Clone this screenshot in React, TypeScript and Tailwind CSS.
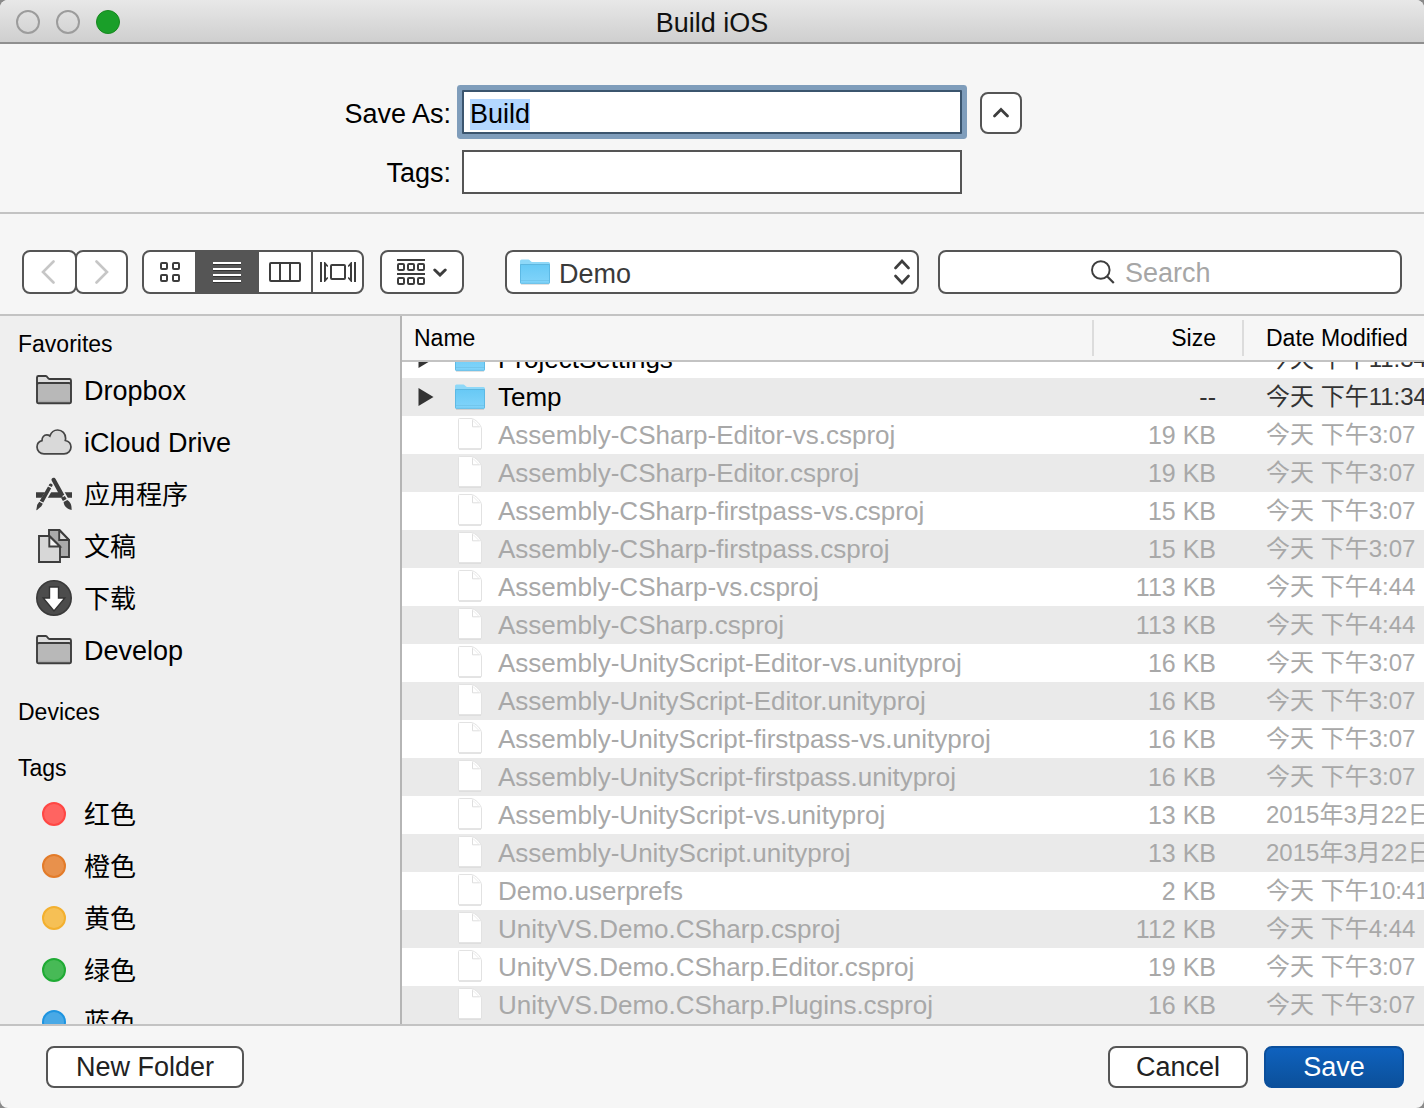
import { useLayoutEffect, useRef } from "react";
import type { ReactNode } from "react";

const files: { name: string; size: string; date: string; folder?: boolean }[] = [
  { name: "ProjectSettings", size: "--", date: "今天 下午11:34", folder: true },
  { name: "Temp", size: "--", date: "今天 下午11:34", folder: true },
  { name: "Assembly-CSharp-Editor-vs.csproj", size: "19 KB", date: "今天 下午3:07" },
  { name: "Assembly-CSharp-Editor.csproj", size: "19 KB", date: "今天 下午3:07" },
  { name: "Assembly-CSharp-firstpass-vs.csproj", size: "15 KB", date: "今天 下午3:07" },
  { name: "Assembly-CSharp-firstpass.csproj", size: "15 KB", date: "今天 下午3:07" },
  { name: "Assembly-CSharp-vs.csproj", size: "113 KB", date: "今天 下午4:44" },
  { name: "Assembly-CSharp.csproj", size: "113 KB", date: "今天 下午4:44" },
  { name: "Assembly-UnityScript-Editor-vs.unityproj", size: "16 KB", date: "今天 下午3:07" },
  { name: "Assembly-UnityScript-Editor.unityproj", size: "16 KB", date: "今天 下午3:07" },
  { name: "Assembly-UnityScript-firstpass-vs.unityproj", size: "16 KB", date: "今天 下午3:07" },
  { name: "Assembly-UnityScript-firstpass.unityproj", size: "16 KB", date: "今天 下午3:07" },
  { name: "Assembly-UnityScript-vs.unityproj", size: "13 KB", date: "2015年3月22日" },
  { name: "Assembly-UnityScript.unityproj", size: "13 KB", date: "2015年3月22日" },
  { name: "Demo.userprefs", size: "2 KB", date: "今天 下午10:41" },
  { name: "UnityVS.Demo.CSharp.csproj", size: "112 KB", date: "今天 下午4:44" },
  { name: "UnityVS.Demo.CSharp.Editor.csproj", size: "19 KB", date: "今天 下午3:07" },
  { name: "UnityVS.Demo.CSharp.Plugins.csproj", size: "16 KB", date: "今天 下午3:07" },
];

const tags = [
  { label: "红色", dot: "border-[#ff4744] bg-[#ff6461]" },
  { label: "橙色", dot: "border-[#e37b29] bg-[#e8914c]" },
  { label: "黄色", dot: "border-[#f3b02f] bg-[#f6c055]" },
  { label: "绿色", dot: "border-[#1fab34] bg-[#47ba56]" },
  { label: "蓝色", dot: "border-[#1e94e0] bg-[#49a9e6]" },
];

function BlueFolder() {
  return (
    <svg width="30" height="26" viewBox="0 0 30 26" aria-hidden="true" className="shrink-0">
      <defs>
        <linearGradient id="folder-front" x1="0" y1="0" x2="0" y2="1">
          <stop offset="0" stopColor="#67c9f5" />
          <stop offset="1" stopColor="#82d4fa" />
        </linearGradient>
      </defs>
      <path d="M1 25.3h28" stroke="#000" strokeOpacity=".15" />
      <path d="M0 2a1.500 1.500 0 0 1 1.500-1.500h7c1.500 0 2 2.500 3.500 2.500h16.500A1.500 1.500 0 0 1 30 4.500V8H0z" fill="#8ed8f8" />
      <path d="M0 5.500h30v18a1.200 1.200 0 0 1-1.200 1.200H1.200A1.200 1.200 0 0 1 0 23.500z" fill="url(#folder-front)" />
      <path d="M.5 5.500h29" stroke="#5fb7df" />
      <path d="M.5 21.500h29" stroke="#72c6ec" />
      <path d="M.5 5.500v18c0 .5.3.800.8.800h27.400c.5 0 .8-.3.800-.8v-18" fill="none" stroke="#57b4e0" strokeOpacity=".8" />
    </svg>
  );
}

function PageIcon() {
  return (
    <svg width="24" height="34" viewBox="0 0 24 34" aria-hidden="true" className="shrink-0">
      <path d="M.5 1.500a1 1 0 0 1 1-1H13c4 0 10.500 6.500 10.500 10.500v19a1 1 0 0 1-1 1h-21a1 1 0 0 1-1-1z" fill="#fff" stroke="#e2e2e2" />
      <path d="M1 31h22" stroke="#d6d6d6" />
      <path d="M14.500 1.500v7.300h7.300" fill="none" stroke="#dedede" />
      <path d="M15 2.500l6 6" stroke="#ececec" />
    </svg>
  );
}

function GrayFolder() {
  return (
    <svg width="36" height="30" viewBox="0 0 36 30" aria-hidden="true">
      <path d="M1 28V2.500A1.500 1.500 0 0 1 2.500 1h7.300c1.700 0 1.900 3 3.700 3h20A1.500 1.500 0 0 1 35 5.500V28z" fill="#dcdcdc" />
      <path d="M1 8.500h34V28H1z" fill="#b8b8b8" />
      <path d="M2 26.500h32" stroke="#a9a9a9" strokeWidth="1.500" />
      <path d="M1 27V2.500A1.500 1.500 0 0 1 2.500 1h7.300c1.700 0 1.900 3 3.700 3h20A1.500 1.500 0 0 1 35 5.500V27a1.200 1.200 0 0 1-1.200 1.200H2.200A1.200 1.200 0 0 1 1 27zM1 10c0-1.300.7-2 2-2h30c1.300 0 2 .7 2 2" fill="none" stroke="#3d3d3d" strokeWidth="1.900" />
    </svg>
  );
}

function CloudIcon() {
  return (
    <svg width="36" height="26" viewBox="0 0 36 26" aria-hidden="true">
      <path d="M8 24.800C4 24.800 1 21.800 1 18c0-3.200 2-5.600 5-6.400C5.900 8.200 8 5.900 10.700 5.900c1.400 0 2.400.4 3.200 1.100C15.200 3.300 18.200 1 21.600 1c4.700 0 8 3.700 8 8.300 0 .8-.1 1.500-.3 2.200C32.700 12.300 35 14.800 35 18c0 3.800-3 6.800-7 6.800z" fill="#d9d9d9" stroke="#454545" strokeWidth="1.700" />
    </svg>
  );
}

function ApplicationsIcon() {
  return (
    <svg width="36" height="34" viewBox="0 0 36 34" aria-hidden="true" fill="#3d3d3d">
      <path d="M0 15.300h36v5.500H0z" />
      <path d="M10.800 12 3.800 24h6.200l7-12zM22.500 12l6.500 12h4.500L27 12z" fill="#efefef" />
      <path d="M13.400 7.100c1-1.500 3.800-.2 3.100 1.700l-.7 1.300-3.200-1.700zM12 9.500l3.200 1.700-7.900 14.300-3.500-1.800zM3.300 24.800l3.500 1.900-1.400 2.500-4.600 4-.5-.3.900-5.100z" />
      <path d="M15.600 1.900c1-1.700 3.200-1.600 4 0l8.700 15.900-3.700 2.100L15.900 4.100c-.4-.8-.6-1.600-.3-2.200zM25.200 20.900l3.700-2 1.700 3.100-3.700 2zM27.600 25.100l3.700-2c2.700 1.600 4.600 4.400 4.300 9.900-4.200-.9-7.700-3.300-8-7.900z" />
    </svg>
  );
}

function DocumentsIcon() {
  return (
    <svg width="32" height="34" viewBox="0 0 32 34" aria-hidden="true" stroke="#3d3d3d" strokeWidth="1.900">
      <path d="M11 1h10.500L31 11v17H11z" fill="#a9a9a9" />
      <path d="M21.200 1v10H31z" fill="#dedede" />
      <path d="M1 7h10.500L22 17.500V33H1z" fill="#d7d7d7" />
      <path d="M11.300 7v10.500H22z" fill="#f2f2f2" />
    </svg>
  );
}

function DownloadsIcon() {
  return (
    <svg width="36" height="36" viewBox="0 0 36 36" aria-hidden="true">
      <circle cx="18" cy="18" r="17.200" fill="#4c4c4c" stroke="#3a3a3a" strokeWidth="1.600" />
      <path d="M13.500 7h9v11h6.300L18 31 7.200 18h6.300z" fill="#fff" stroke="#333" strokeWidth="1.400" />
    </svg>
  );
}

function SidebarHeading({ children }: { children: ReactNode }) {
  return <h2 className="h-10 pl-[18px] text-[23px] leading-10 font-normal">{children}</h2>;
}

function SidebarItem({ icon, label, cjk }: { icon: ReactNode; label: string; cjk?: boolean }) {
  return (
    <li>
      <button type="button" className="flex h-[52px] w-full items-center gap-3 pl-9 text-left">
        <span className="flex w-9 justify-center">{icon}</span>
        <span className={cjk ? "pt-0.5 text-[26px] leading-10" : "pt-0.5 text-[27px] leading-10"}>{label}</span>
      </button>
    </li>
  );
}

const box = "border-2 border-[#555] bg-white";

export default function App() {
  const nameRef = useRef<HTMLInputElement>(null);
  const listRef = useRef<HTMLDivElement>(null);

  useLayoutEffect(() => {
    nameRef.current?.focus();
    nameRef.current?.select();
    if (listRef.current) listRef.current.scrollTop = 22;
  }, []);

  return (
    <div className="h-screen bg-[#8a8a8a] font-['Liberation_Sans','Noto_Sans_CJK_SC',sans-serif] text-black">
      <div className="flex h-full flex-col overflow-hidden rounded-lg bg-[#f6f6f6]">
        <header className="grid h-11 shrink-0 grid-cols-[1fr_auto_1fr] items-center border-b-2 border-[#8f8f8f] bg-linear-to-b from-[#e8e8e8] to-[#cfcfcf] px-4 pt-0.5">
          <div className="flex gap-4">
            <button type="button" aria-label="Close" className="size-6 rounded-full border-2 border-[#9c9c9c]" />
            <button type="button" aria-label="Minimize" className="size-6 rounded-full border-2 border-[#9c9c9c]" />
            <button type="button" aria-label="Zoom" className="size-6 rounded-full border border-[#17881f] bg-[#1a9f29]" />
          </div>
          <h1 className="pt-0.5 text-[27px] leading-8 font-normal text-[#111]">Build iOS</h1>
        </header>

        <section className="grid shrink-0 grid-cols-[1fr_500px_1fr] items-center gap-y-4 border-b-2 border-[#c3c3c3] pt-[46px] pb-[18px]">
          <label htmlFor="save-as" className="pt-1 pr-[11px] text-right text-[27px] leading-10">
            Save As:
          </label>
          <input
            id="save-as"
            ref={nameRef}
            defaultValue="Build"
            className="h-11 w-full border-2 border-[#3b556e] bg-white px-[6px] pt-1 text-[27px] text-black outline-none selection:bg-[#b3d7ff] selection:text-black focus:rounded-[1px] focus:ring-[5px] focus:ring-[#7f9dbb]"
          />
          <button type="button" aria-label="Collapse" className={`ml-[18px] flex h-[42px] w-[42px] items-center justify-center self-end rounded-lg ${box}`}>
            <svg width="18" height="12" viewBox="0 0 18 12" aria-hidden="true">
              <path d="M2.500 9 9 2.500 15.500 9" fill="none" stroke="#3d3d3d" strokeWidth="2.800" strokeLinecap="round" />
            </svg>
          </button>
          <label htmlFor="tags" className="pt-0.5 pr-[11px] text-right text-[27px] leading-10">
            Tags:
          </label>
          <input id="tags" className={`h-11 w-full px-[6px] text-[27px] outline-none ${box}`} />
        </section>

        <section className="flex shrink-0 items-center border-b-2 border-[#c3c3c3] px-[22px] pt-9 pb-5">
          <div className="flex shrink-0">
            <button type="button" aria-label="Back" className={`flex h-11 w-[55px] items-center justify-center rounded-lg pr-1 ${box}`}>
              <svg width="14" height="24" viewBox="0 0 14 24" aria-hidden="true">
                <path d="M12.500 1.500 2 12l10.500 10.500" fill="none" stroke="#c6c6c6" strokeWidth="2.600" strokeLinecap="round" />
              </svg>
            </button>
            <button type="button" aria-label="Forward" className={`-ml-0.5 flex h-11 w-[53px] items-center justify-center rounded-lg ${box}`}>
              <svg width="14" height="24" viewBox="0 0 14 24" aria-hidden="true">
                <path d="M1.500 1.500 12 12 1.500 22.500" fill="none" stroke="#c6c6c6" strokeWidth="2.600" strokeLinecap="round" />
              </svg>
            </button>
          </div>

          <div role="group" aria-label="View" className={`ml-[14px] flex h-11 w-[222px] shrink-0 overflow-hidden rounded-lg ${box}`}>
            <button type="button" aria-label="Icons" className="flex w-[51px] items-center justify-center">
              <svg width="20" height="20" viewBox="0 0 20 20" aria-hidden="true" fill="none" stroke="#3d3d3d" strokeWidth="2">
                <rect x="1" y="1" width="6" height="6" rx="1" />
                <rect x="13" y="1" width="6" height="6" rx="1" />
                <rect x="1" y="13" width="6" height="6" rx="1" />
                <rect x="13" y="13" width="6" height="6" rx="1" />
              </svg>
            </button>
            <button type="button" aria-label="List" aria-pressed="true" className="flex w-16 items-center justify-center bg-[#555]">
              <svg width="28" height="22" viewBox="0 0 28 22" aria-hidden="true">
                <path d="M0 3.500h28M0 9.500h28M0 15.500h28M0 21.500h28" stroke="#333" />
                <path d="M0 2h28M0 8h28M0 14h28M0 20h28" stroke="#fff" strokeWidth="2" />
              </svg>
            </button>
            <button type="button" aria-label="Columns" className="flex w-[52px] items-center justify-center">
              <svg width="32" height="20" viewBox="0 0 32 20" aria-hidden="true" fill="none" stroke="#3d3d3d" strokeWidth="2">
                <rect x="1" y="1" width="30" height="18" rx="1" />
                <path d="M11 1v18M21 1v18" />
              </svg>
            </button>
            <button type="button" aria-label="Cover Flow" className="flex flex-1 items-center justify-center border-l-2 border-[#555]">
              <svg width="36" height="20" viewBox="0 0 36 20" aria-hidden="true" fill="#3d3d3d">
                <path d="M0 0h2v20H0zM34 0h2v20h-2z" />
                <path d="M4 0h1l3 3.500v1.500L6 4v12l2-1v1.500L5 20H4zM32 0h-1l-3 3.500v1.500l2-1v12l-2-1v1.500l3 3.500h1z" />
                <rect x="11" y="3" width="14" height="14" rx="1" fill="none" stroke="#3d3d3d" strokeWidth="2" />
              </svg>
            </button>
          </div>

          <button type="button" aria-label="Arrange by" className={`ml-4 flex h-11 w-[84px] shrink-0 items-center justify-center gap-2 rounded-lg ${box}`}>
            <svg width="28" height="26" viewBox="0 0 28 26" aria-hidden="true" fill="none" stroke="#3d3d3d" strokeWidth="2">
              <path d="M0 1h28M0 15h28" />
              <rect x="1" y="5" width="6" height="6" rx="1" />
              <rect x="11" y="5" width="6" height="6" rx="1" />
              <rect x="21" y="5" width="6" height="6" rx="1" />
              <rect x="1" y="19" width="6" height="6" rx="1" />
              <rect x="11" y="19" width="6" height="6" rx="1" />
              <rect x="21" y="19" width="6" height="6" rx="1" />
            </svg>
            <svg width="14" height="10" viewBox="0 0 14 10" aria-hidden="true">
              <path d="m1.800 3 5.200 5 5.200-5" fill="none" stroke="#3d3d3d" strokeWidth="3" strokeLinecap="round" />
            </svg>
          </button>

          <div className="relative ml-[41px] min-w-0 flex-1">
            <select aria-label="Location" className={`h-11 w-full appearance-none rounded-lg pt-0.5 pl-[52px] text-[27px] text-[#3a3a3a] outline-none ${box}`}>
              <option>Demo</option>
            </select>
            <span className="pointer-events-none absolute inset-y-0 left-[15px] flex items-center">
              <BlueFolder />
            </span>
            <svg width="16" height="26" viewBox="0 0 16 26" aria-hidden="true" className="pointer-events-none absolute inset-y-0 right-[9px] my-auto">
              <path d="M1.500 9 8 2l6.500 7M1.500 17 8 24l6.500-7" fill="none" stroke="#3d3d3d" strokeWidth="2.600" strokeLinecap="round" />
            </svg>
          </div>

          <label className={`ml-[19px] flex h-11 w-[464px] shrink-0 items-center justify-center gap-[10px] rounded-lg ${box}`}>
            <svg width="24" height="24" viewBox="0 0 24 24" aria-hidden="true" className="shrink-0">
              <circle cx="9.800" cy="10" r="8.800" fill="none" stroke="#3d3d3d" strokeWidth="1.900" />
              <path d="m16 16.200 6.800 6.800" stroke="#3d3d3d" strokeWidth="2.200" />
            </svg>
            <input type="search" aria-label="Search" placeholder="Search" className="w-[124px] bg-transparent pt-0.5 text-[27px] outline-none placeholder:text-[#a6a6a6]" />
          </label>
        </section>

        <main className="flex min-h-0 flex-1">
          <nav className="w-[402px] shrink-0 overflow-hidden border-r-2 border-[#b5b5b5] bg-[#efefef] pt-2">
            <SidebarHeading>Favorites</SidebarHeading>
            <ul>
              <SidebarItem icon={<GrayFolder />} label="Dropbox" />
              <SidebarItem icon={<CloudIcon />} label="iCloud Drive" />
              <SidebarItem icon={<ApplicationsIcon />} label="应用程序" cjk />
              <SidebarItem icon={<DocumentsIcon />} label="文稿" cjk />
              <SidebarItem icon={<DownloadsIcon />} label="下载" cjk />
              <SidebarItem icon={<GrayFolder />} label="Develop" />
            </ul>
            <div className="mt-4">
              <SidebarHeading>Devices</SidebarHeading>
            </div>
            <div className="mt-4">
              <SidebarHeading>Tags</SidebarHeading>
            </div>
            <ul>
              {tags.map((t) => (
                <SidebarItem key={t.label} icon={<span className={`size-6 rounded-full border-2 ${t.dot}`} />} label={t.label} cjk />
              ))}
            </ul>
          </nav>

          <div ref={listRef} className="min-w-0 flex-1 overflow-x-hidden overflow-y-auto bg-white [scrollbar-width:none]">
            <table className="w-full table-fixed border-separate border-spacing-0">
              <thead className="sticky top-0 z-10 bg-[#f6f6f6] text-[23px] leading-9">
                <tr className="h-[46px]">
                  <th scope="col" className="border-b-2 border-[#c3c3c3] p-0 text-left font-normal">
                    <div className="border-r-2 border-[#dcdcdc] pl-3">Name</div>
                  </th>
                  <th scope="col" className="w-[150px] border-b-2 border-[#c3c3c3] p-0 text-right font-normal">
                    <div className="border-r-2 border-[#dcdcdc] pr-[26px]">Size</div>
                  </th>
                  <th scope="col" className="w-[180px] border-b-2 border-[#c3c3c3] p-0 text-left font-normal">
                    <div className="pl-[22px] whitespace-nowrap">Date Modified</div>
                  </th>
                </tr>
              </thead>
              <tbody>
                {files.map((f) => (
                  <tr key={f.name} className={`h-[38px] whitespace-nowrap even:bg-[#eaeaea] ${f.folder ? "text-black" : "text-[#a8a8a8]"}`}>
                    <td className="p-0">
                      <div className="flex h-[38px] items-center pl-4">
                        <span className="w-9 shrink-0">
                          {f.folder && (
                            <svg width="16" height="18" viewBox="0 0 16 18" role="img" aria-label="Expand">
                              <path d="M.5 0 15.500 9 .5 18z" fill="#333" />
                            </svg>
                          )}
                        </span>
                        <span className="mr-3 flex w-8 shrink-0 justify-center">{f.folder ? <BlueFolder /> : <PageIcon />}</span>
                        <span className="text-[26px] leading-[38px]">{f.name}</span>
                      </div>
                    </td>
                    <td className={`p-0 pr-7 text-right text-[25px] leading-[38px] ${f.folder ? "text-[#333]" : ""}`}>{f.size}</td>
                    <td className={`overflow-hidden p-0 pl-[22px] text-[24px] leading-[38px] ${f.folder ? "text-[#333]" : ""}`}>{f.date}</td>
                  </tr>
                ))}
              </tbody>
            </table>
          </div>
        </main>

        <footer className="flex shrink-0 items-center gap-4 border-t-2 border-[#c3c3c3] py-5 pr-5 pl-[46px] text-[27px] leading-[38px] text-[#222]">
          <button type="button" className={`w-[198px] rounded-lg ${box}`}>New Folder</button>
          <button type="button" className={`ml-auto w-[140px] rounded-lg ${box}`}>Cancel</button>
          <button type="button" className="w-[140px] rounded-lg border-2 border-[#0b4f9c] bg-linear-to-b from-[#0f62be] to-[#0b509b] text-white">Save</button>
        </footer>
      </div>
    </div>
  );
}
